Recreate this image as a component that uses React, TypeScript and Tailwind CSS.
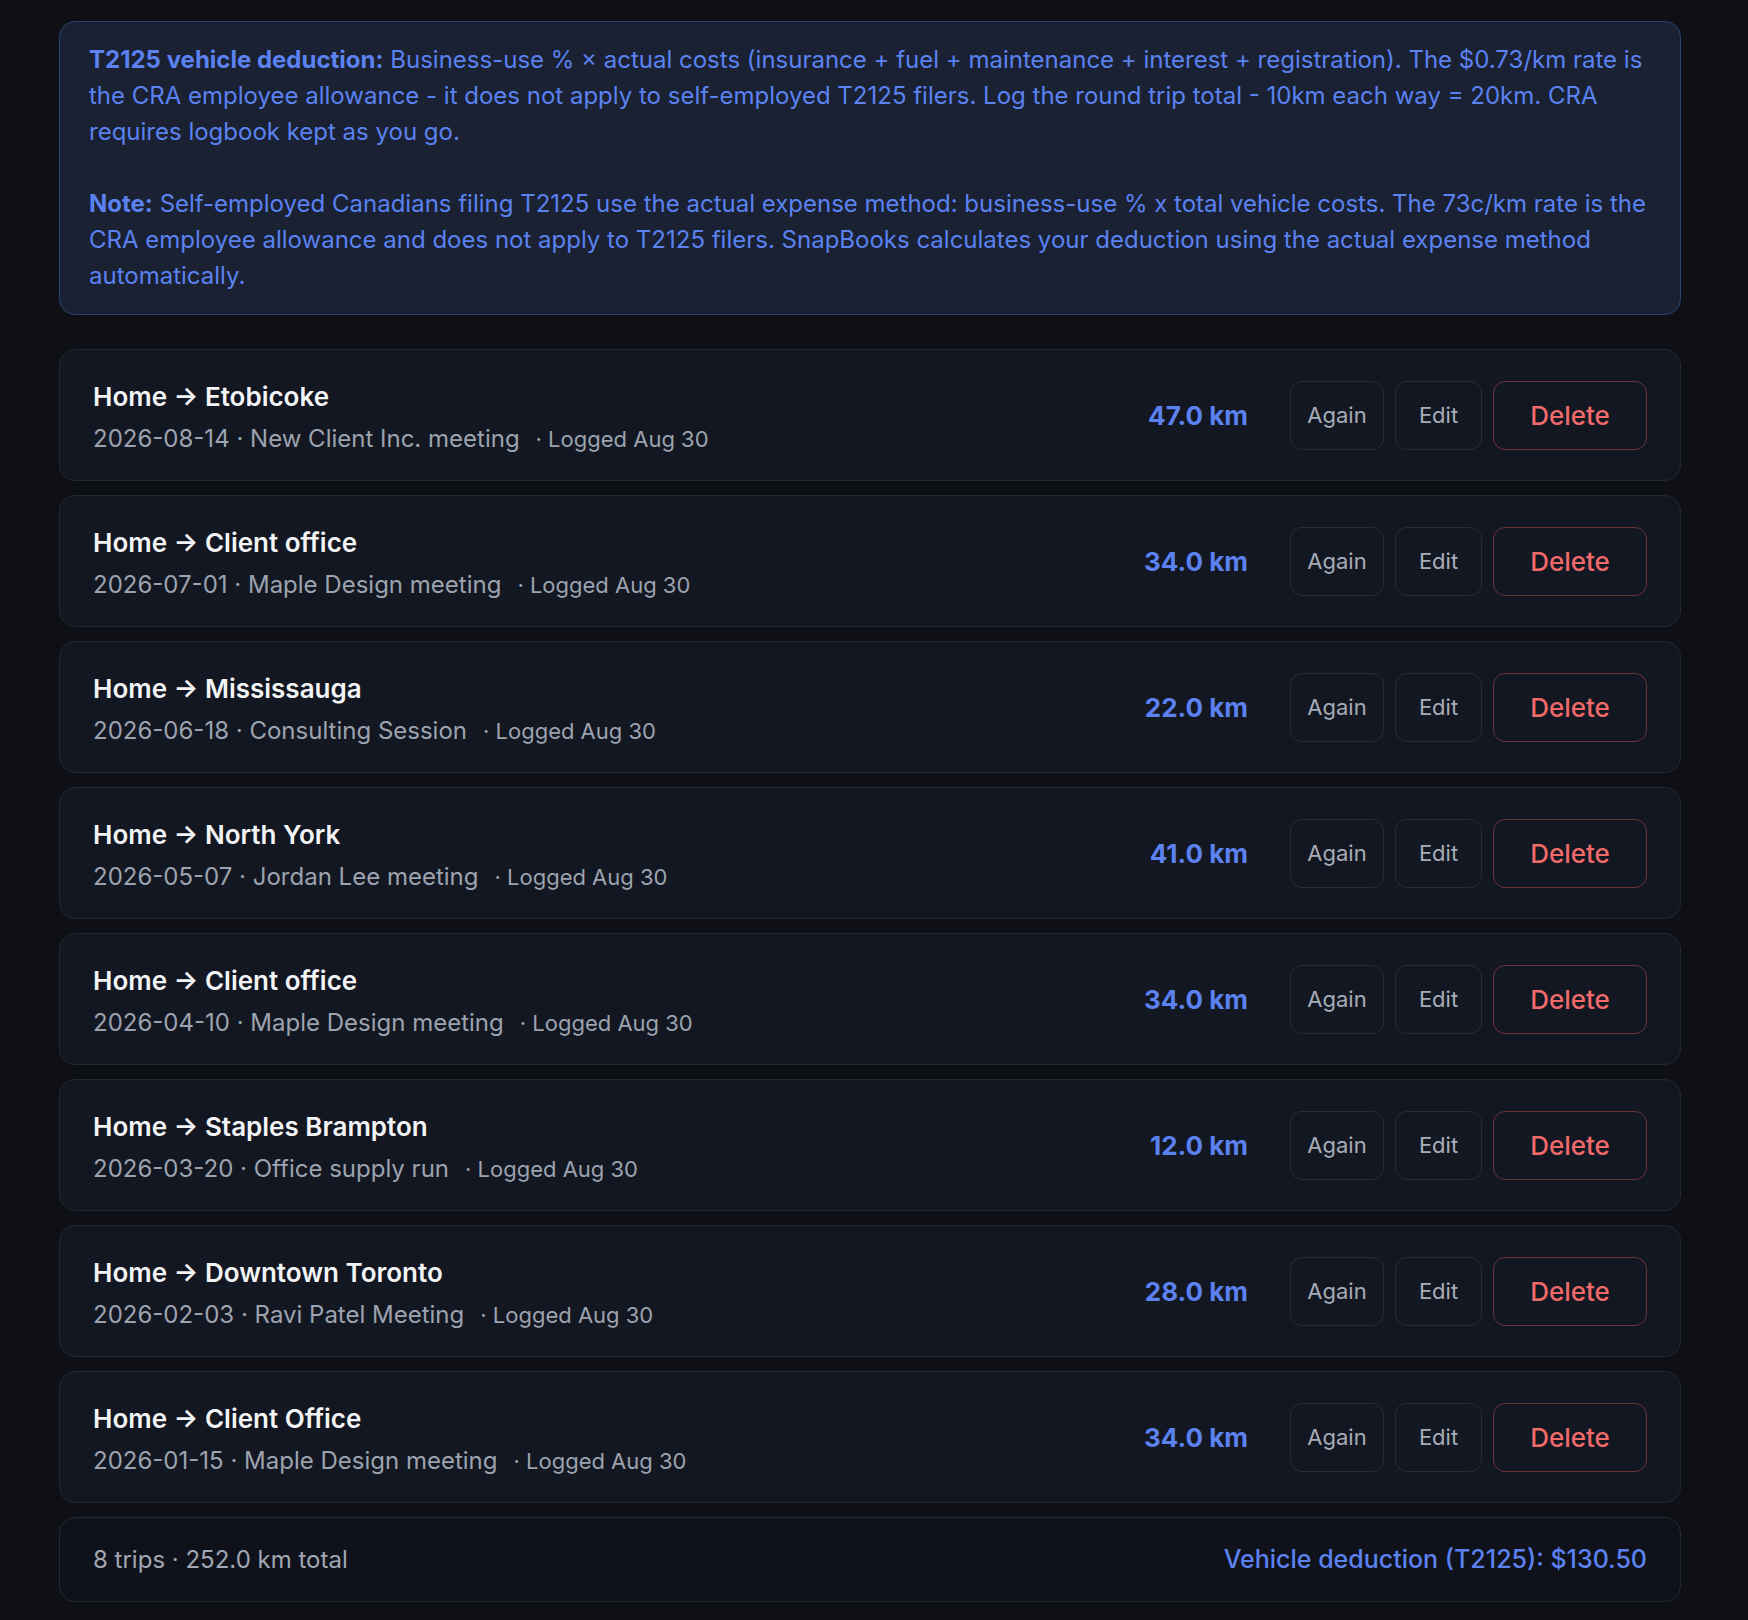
type Trip = {
  to: string;
  date: string;
  purpose: string;
  km: number;
};

const trips: Trip[] = [
  { to: "Etobicoke", date: "2026-08-14", purpose: "New Client Inc. meeting", km: 47 },
  { to: "Client office", date: "2026-07-01", purpose: "Maple Design meeting", km: 34 },
  { to: "Mississauga", date: "2026-06-18", purpose: "Consulting Session", km: 22 },
  { to: "North York", date: "2026-05-07", purpose: "Jordan Lee meeting", km: 41 },
  { to: "Client office", date: "2026-04-10", purpose: "Maple Design meeting", km: 34 },
  { to: "Staples Brampton", date: "2026-03-20", purpose: "Office supply run", km: 12 },
  { to: "Downtown Toronto", date: "2026-02-03", purpose: "Ravi Patel Meeting", km: 28 },
  { to: "Client Office", date: "2026-01-15", purpose: "Maple Design meeting", km: 34 },
];

function TripRow({ trip }: { trip: Trip }) {
  return (
    <div className="flex h-[132px] items-center rounded-2xl border border-[#222834] bg-[#131722] px-[33px]">
      <div className="flex flex-1 flex-col pt-[4px]">
        <div className="text-[26px] font-semibold leading-[34px] text-[#f3f4f6]">
          Home → {trip.to}
        </div>
        <div className="mt-[9px] text-[24px] leading-[32px] text-[#9ca3af]">
          {trip.date} · {trip.purpose}
          <span className="ml-[16px] text-[22px]">· Logged Aug 30</span>
        </div>
      </div>
      <div className="mr-[42px] text-[26px] font-bold text-[#5b82f0]">{trip.km.toFixed(1)} km</div>
      <div className="flex gap-[11px]">
        <button className="h-[69px] w-[94px] rounded-xl border border-[#262c38] text-[22px] text-[#a7adb8]">
          Again
        </button>
        <button className="h-[69px] w-[87px] rounded-xl border border-[#262c38] text-[22px] text-[#a7adb8]">
          Edit
        </button>
        <button className="h-[69px] w-[154px] rounded-xl border border-[#6e333b] text-[26px] font-medium text-[#f06a6a]">
          Delete
        </button>
      </div>
    </div>
  );
}

export default function App() {
  const totalKm = trips.reduce((sum, t) => sum + t.km, 0);

  return (
    <div
      className="min-h-screen bg-[#0e1016] pl-[59px] pr-[67px] pt-[21px] pb-[18px]"
      style={{ fontFamily: "Inter, 'Noto Sans', sans-serif" }}
    >
      {/* T2125 guidance */}
      <div className="rounded-2xl border border-[#2b4372] bg-[#192133] px-[29px] py-[20px] text-[24px] leading-[36px] text-[#5b82f0]">
        <p>
          <span className="font-bold">T2125 vehicle deduction:</span> Business-use % × actual costs
          (insurance + fuel + maintenance + interest + registration). The $0.73/km rate is the CRA
          employee allowance - it does not apply to self-employed T2125 filers. Log the round trip
          total - 10km each way = 20km. CRA requires logbook kept as you go.
        </p>
        <p className="mt-[36px]">
          <span className="font-bold">Note:</span> Self-employed Canadians filing T2125 use the actual
          expense method: business-use % x total vehicle costs. The 73c/km rate is the CRA employee
          allowance and does not apply to T2125 filers. SnapBooks calculates your deduction using the
          actual expense method automatically.
        </p>
      </div>

      <div className="mt-[34px] flex flex-col gap-[14px]">
        {trips.map((trip, i) => (
          <TripRow key={i} trip={trip} />
        ))}

        {/* totals */}
        <div className="flex h-[85px] items-center justify-between rounded-2xl border border-[#222834] bg-[#0f121a] px-[33px] text-[24px]">
          <span className="text-[#a1a7b3]">
            {trips.length} trips · {totalKm.toFixed(1)} km total
          </span>
          <span className="text-[25px] font-medium text-[#5b82f0]">Vehicle deduction (T2125): $130.50</span>
        </div>
      </div>
    </div>
  );
}
